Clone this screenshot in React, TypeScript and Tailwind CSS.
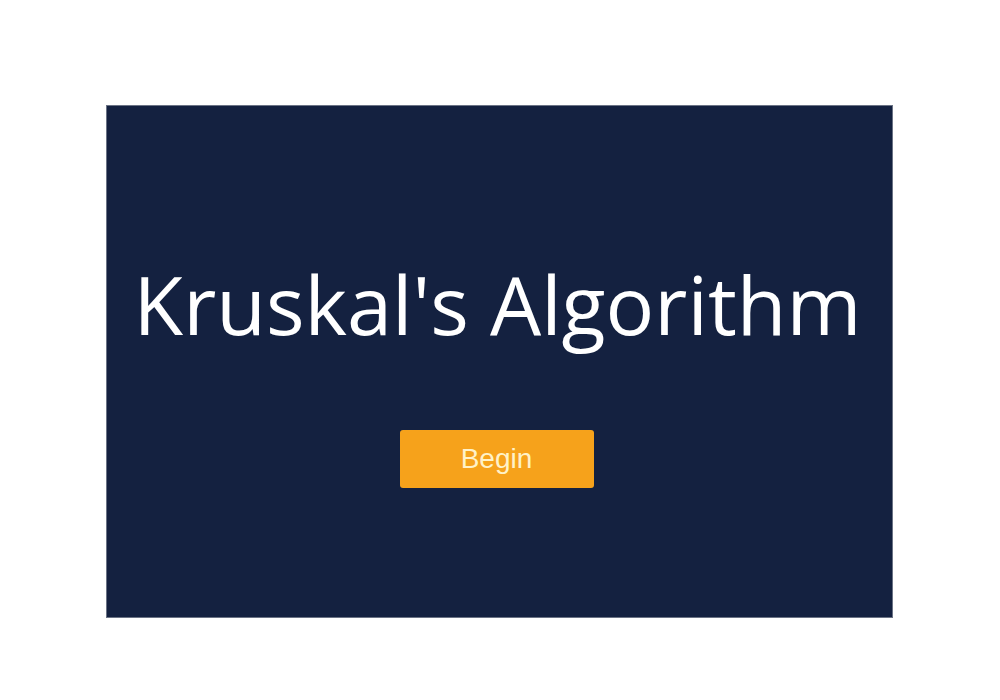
export default function App() {
  return (
    <div className="min-h-[700px] w-[1000px] bg-white pt-[105px]">
      <div className="ml-[106px] flex h-[513px] w-[787px] flex-col items-center border border-[#6b7385] bg-[#142140] pt-[148px]">
        <h1 className="mr-[4px] text-[81px] leading-[100px] text-white [font-family:'Open_Sans',sans-serif]">
          Kruskal's Algorithm
        </h1>
        <button className="mr-[6px] mt-[76px] h-[58px] w-[194px] rounded-[3px] bg-[#f6a21b] text-[28px] text-[#fff2c8] [font-family:'Liberation_Sans',Arial,sans-serif]">
          Begin
        </button>
      </div>
    </div>
  );
}
